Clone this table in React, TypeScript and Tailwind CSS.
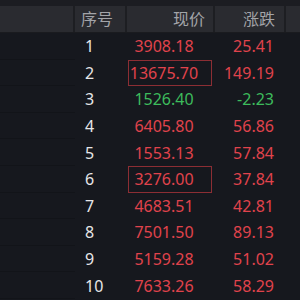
import React from "react";

type Row = { no: number; price: string; change: string; up: boolean; boxed?: boolean };

const rows: Row[] = [
  { no: 1, price: "3908.18", change: "25.41", up: true },
  { no: 2, price: "13675.70", change: "149.19", up: true, boxed: true },
  { no: 3, price: "1526.40", change: "-2.23", up: false },
  { no: 4, price: "6405.80", change: "56.86", up: true },
  { no: 5, price: "1553.13", change: "57.84", up: true },
  { no: 6, price: "3276.00", change: "37.84", up: true, boxed: true },
  { no: 7, price: "4683.51", change: "42.81", up: true },
  { no: 8, price: "7501.50", change: "89.13", up: true },
  { no: 9, price: "5159.28", change: "51.02", up: true },
  { no: 10, price: "7633.26", change: "58.29", up: true },
];

const font = { fontFamily: '"Noto Sans", "Noto Sans CJK SC", sans-serif' };

const App: React.FC = () => {
  return (
    <div className="w-[300px] h-[300px] overflow-hidden bg-[#16181e] text-[16px] leading-none" style={font}>
      <div className="h-[6px] bg-[#1c1d22]" />
      <div className="flex h-[27px] bg-[#2a2b30] text-[#a3a4a8] border-b border-[#1a1b1f]">
        <div className="w-[75px] border-r-2 border-[#1d1e22]" />
        <div className="w-[52px] flex items-center justify-center pr-[6px] border-r-2 border-[#1d1e22]">序号</div>
        <div className="w-[88px] flex items-center justify-end pr-[8px] border-r-2 border-[#1d1e22]">现价</div>
        <div className="w-[71px] flex items-center justify-end pr-[9px] border-r-2 border-[#1d1e22]">涨跌</div>
        <div className="flex-1" />
      </div>
      {rows.map((r) => {
        const color = r.up ? "text-[#e0434c]" : "text-[#3dbb5c]";
        return (
          <div key={r.no} className="flex h-[26.6px]">
            <div className="w-[75px] border-b border-[#121419]" />
            <div className="w-[52px] flex items-center pl-[10px] text-[#e6e6e8]">{r.no}</div>
            <div className="w-[88px] flex items-center pl-[1px] pr-[3px]">
              <div
                className={`flex-1 h-full flex items-center justify-center pr-[12px] ${color} ${
                  r.boxed ? "border border-[#8c2e34]" : "border border-transparent"
                }`}
              >
                {r.price}
              </div>
            </div>
            <div className={`w-[71px] flex items-center justify-end pr-[12px] ${color}`}>{r.change}</div>
            <div className="flex-1" />
          </div>
        );
      })}
    </div>
  );
};

export default App;
